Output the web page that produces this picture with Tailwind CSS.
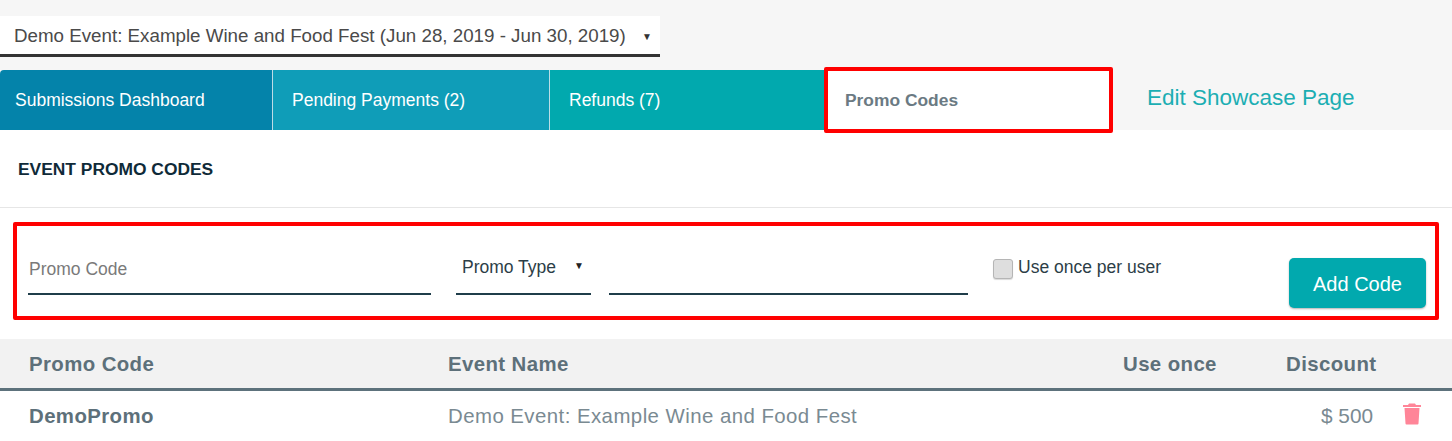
<!DOCTYPE html>
<html><head><meta charset="utf-8"><script src="https://cdn.jsdelivr.net/npm/@tailwindcss/browser@4"></script></head>
<body class="m-0 bg-[#f6f6f6] font-['Liberation_Sans',Arial,sans-serif] overflow-hidden">
<div class="relative w-[1452px] h-[441px] overflow-hidden">
  <div class="pt-4 h-[70px]">
    <div class="w-[660px] h-[41px] bg-white border-b-[3px] border-[#333] flex items-center justify-between pl-[14px] pr-[8px] pt-[2px] text-[18.75px] text-[#4a4a4a]">
      <span>Demo Event: Example Wine and Food Fest (Jun 28, 2019 - Jun 30, 2019)</span>
      <span class="text-[10px] text-[#333]">▼</span>
    </div>
  </div>
  <div class="flex h-[60px] text-[17.5px]">
    <div class="w-[273px] bg-[#0483aa] text-white flex items-center pl-[15px] border-r border-[#bcdde6] rounded-tl-[4px]">Submissions Dashboard</div>
    <div class="w-[277px] bg-[#0f9db8] text-white flex items-center pl-[19px] border-r border-[#bcdde6]">Pending Payments (2)</div>
    <div class="w-[274px] bg-[#01a9ae] text-white flex items-center pl-[19px]">Refunds (7)</div>
    <div class="relative w-[289px] bg-white text-[#6b7a83] font-bold text-[17.4px] flex items-center pl-[21px]">Promo Codes
      <div class="absolute left-0 right-0 top-[-3px] bottom-[-3px] border-4 border-[#ff0000] rounded-[2px]"></div>
    </div>
    <div class="pl-[34px] text-[22.5px] text-[#1caeb3] flex items-center pb-[4px]">Edit Showcase Page</div>
  </div>
  <div class="bg-white h-[311px]">
    <div class="h-[78px] border-b border-[#e6e6e6] pl-[18px] pt-[29px] text-[17.4px] leading-5 font-bold text-[#0f2a38]">EVENT PROMO CODES</div>
    <div class="relative h-[98px] mt-[14px] mx-[13px] border-4 border-[#ff0000] rounded-[2px] flex">
      <div class="w-[403px] ml-[11px] mt-[16px] h-[53px] border-b-2 border-[#1f3d4a] text-[17.5px] text-[#7a7a7a] flex items-center pt-[3px] pl-[1px]">Promo Code</div>
      <div class="w-[135px] ml-[25px] mt-[16px] h-[53px] border-b-2 border-[#1f3d4a] text-[17.5px] text-[#2c3e47] flex items-start justify-between pl-[6px] pr-[7px] pt-[12px]">
        <span>Promo Type</span><span class="text-[10px] leading-6 text-[#222]">▼</span>
      </div>
      <div class="w-[359px] ml-[18px] mt-[16px] h-[53px] border-b-2 border-[#1f3d4a]"></div>
      <div class="ml-[25px] mt-[30px] flex items-start h-[30px]">
        <span class="w-[20px] h-[20px] mt-[3px] rounded-[3px] border border-[#b5b5b5] bg-[#dedede] shadow-[0_1px_1px_rgba(0,0,0,0.15)]"></span>
        <span class="ml-[5px] text-[17.5px] leading-5 text-[#2c3e47] pt-[1px]">Use once per user</span>
      </div>
      <button class="absolute left-[1272px] top-[32px] w-[137px] h-[50px] pt-[1px] bg-[#01a9ae] text-white text-[20px] rounded-[5px] shadow-[0_1px_2px_rgba(0,0,0,0.3)]">Add Code</button>
    </div>
    <div class="mt-[19px] h-[52px] bg-[#f2f2f2] border-b-[3px] border-[#5d727c] flex items-center pt-[2px] text-[20.4px] font-bold tracking-[0.4px] text-[#5d707a]">
      <span class="w-[448px] pl-[29px]">Promo Code</span>
      <span class="w-[675px]">Event Name</span>
      <span class="w-[163px]">Use once</span>
      <span>Discount</span>
    </div>
    <div class="h-[50px] flex items-center text-[20.4px] text-[#7a8a92]">
      <span class="w-[448px] pl-[29px] font-bold tracking-[0.4px] text-[#5d707a]">DemoPromo</span>
      <span class="w-[873px] tracking-[0.45px]">Demo Event: Example Wine and Food Fest</span>
      <span class="w-[55px] text-[20.8px]">$ 500</span>
      <svg class="ml-[26px] mb-[6px]" width="20" height="24" viewBox="0 0 20 24"><path d="M7 2.500h6l1 1.500h5v2H1v-2h5zM2.500 7h15l-1 15.500q0 1-1 1h-11q-1 0-1-1z" fill="#ff8598"/></svg>
    </div>
  </div>
</div>
</body></html>
